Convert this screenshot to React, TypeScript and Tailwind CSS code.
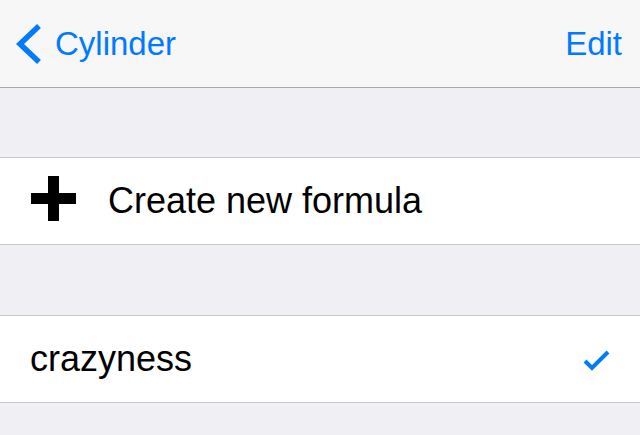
export default function App() {
  return (
    <div
      className="w-[640px] h-[435px] overflow-hidden bg-[#efeff4]"
      style={{ fontFamily: '"Liberation Sans", Arial, sans-serif' }}
    >
      {/* Navigation bar */}
      <div className="h-[88px] bg-[#f7f7f7] border-b border-[#a8a8ab] flex items-center justify-between pl-[13px] pr-[18px]">
        <button className="flex items-center gap-[12px] text-[#007aff]">
          <svg width="30" height="42" viewBox="0 0 30 42" className="shrink-0">
            <path d="M26 3 L7 21 L26 39" fill="none" stroke="#007aff" strokeWidth="5.5" />
          </svg>
          <span className="text-[33px] leading-none">Cylinder</span>
        </button>
        <button className="text-[33px] leading-none text-[#007aff]">Edit</button>
      </div>

      <div className="h-[69px]" />

      {/* Create row */}
      <div className="h-[88px] bg-white border-y border-[#c8c7cc] flex items-center pl-[31px]">
        <svg width="45" height="45" viewBox="0 0 45 45" className="shrink-0 mb-[6px]">
          <rect x="17" y="0" width="11" height="45" fill="#000" />
          <rect x="0" y="17" width="45" height="11" fill="#000" />
        </svg>
        <span className="ml-[32px] text-[36px] leading-none text-black">Create new formula</span>
      </div>

      <div className="h-[70px]" />

      {/* Formula row */}
      <div className="h-[88px] bg-white border-y border-[#c8c7cc] flex items-center justify-between pl-[30px] pr-[30px]">
        <span className="text-[36px] leading-none text-black">crazyness</span>
        <svg width="28" height="24" viewBox="0 0 28 24" className="shrink-0">
          <path d="M3 14 L10 21 L26 5" fill="none" stroke="#007aff" strokeWidth="4" />
        </svg>
      </div>
    </div>
  )
}
